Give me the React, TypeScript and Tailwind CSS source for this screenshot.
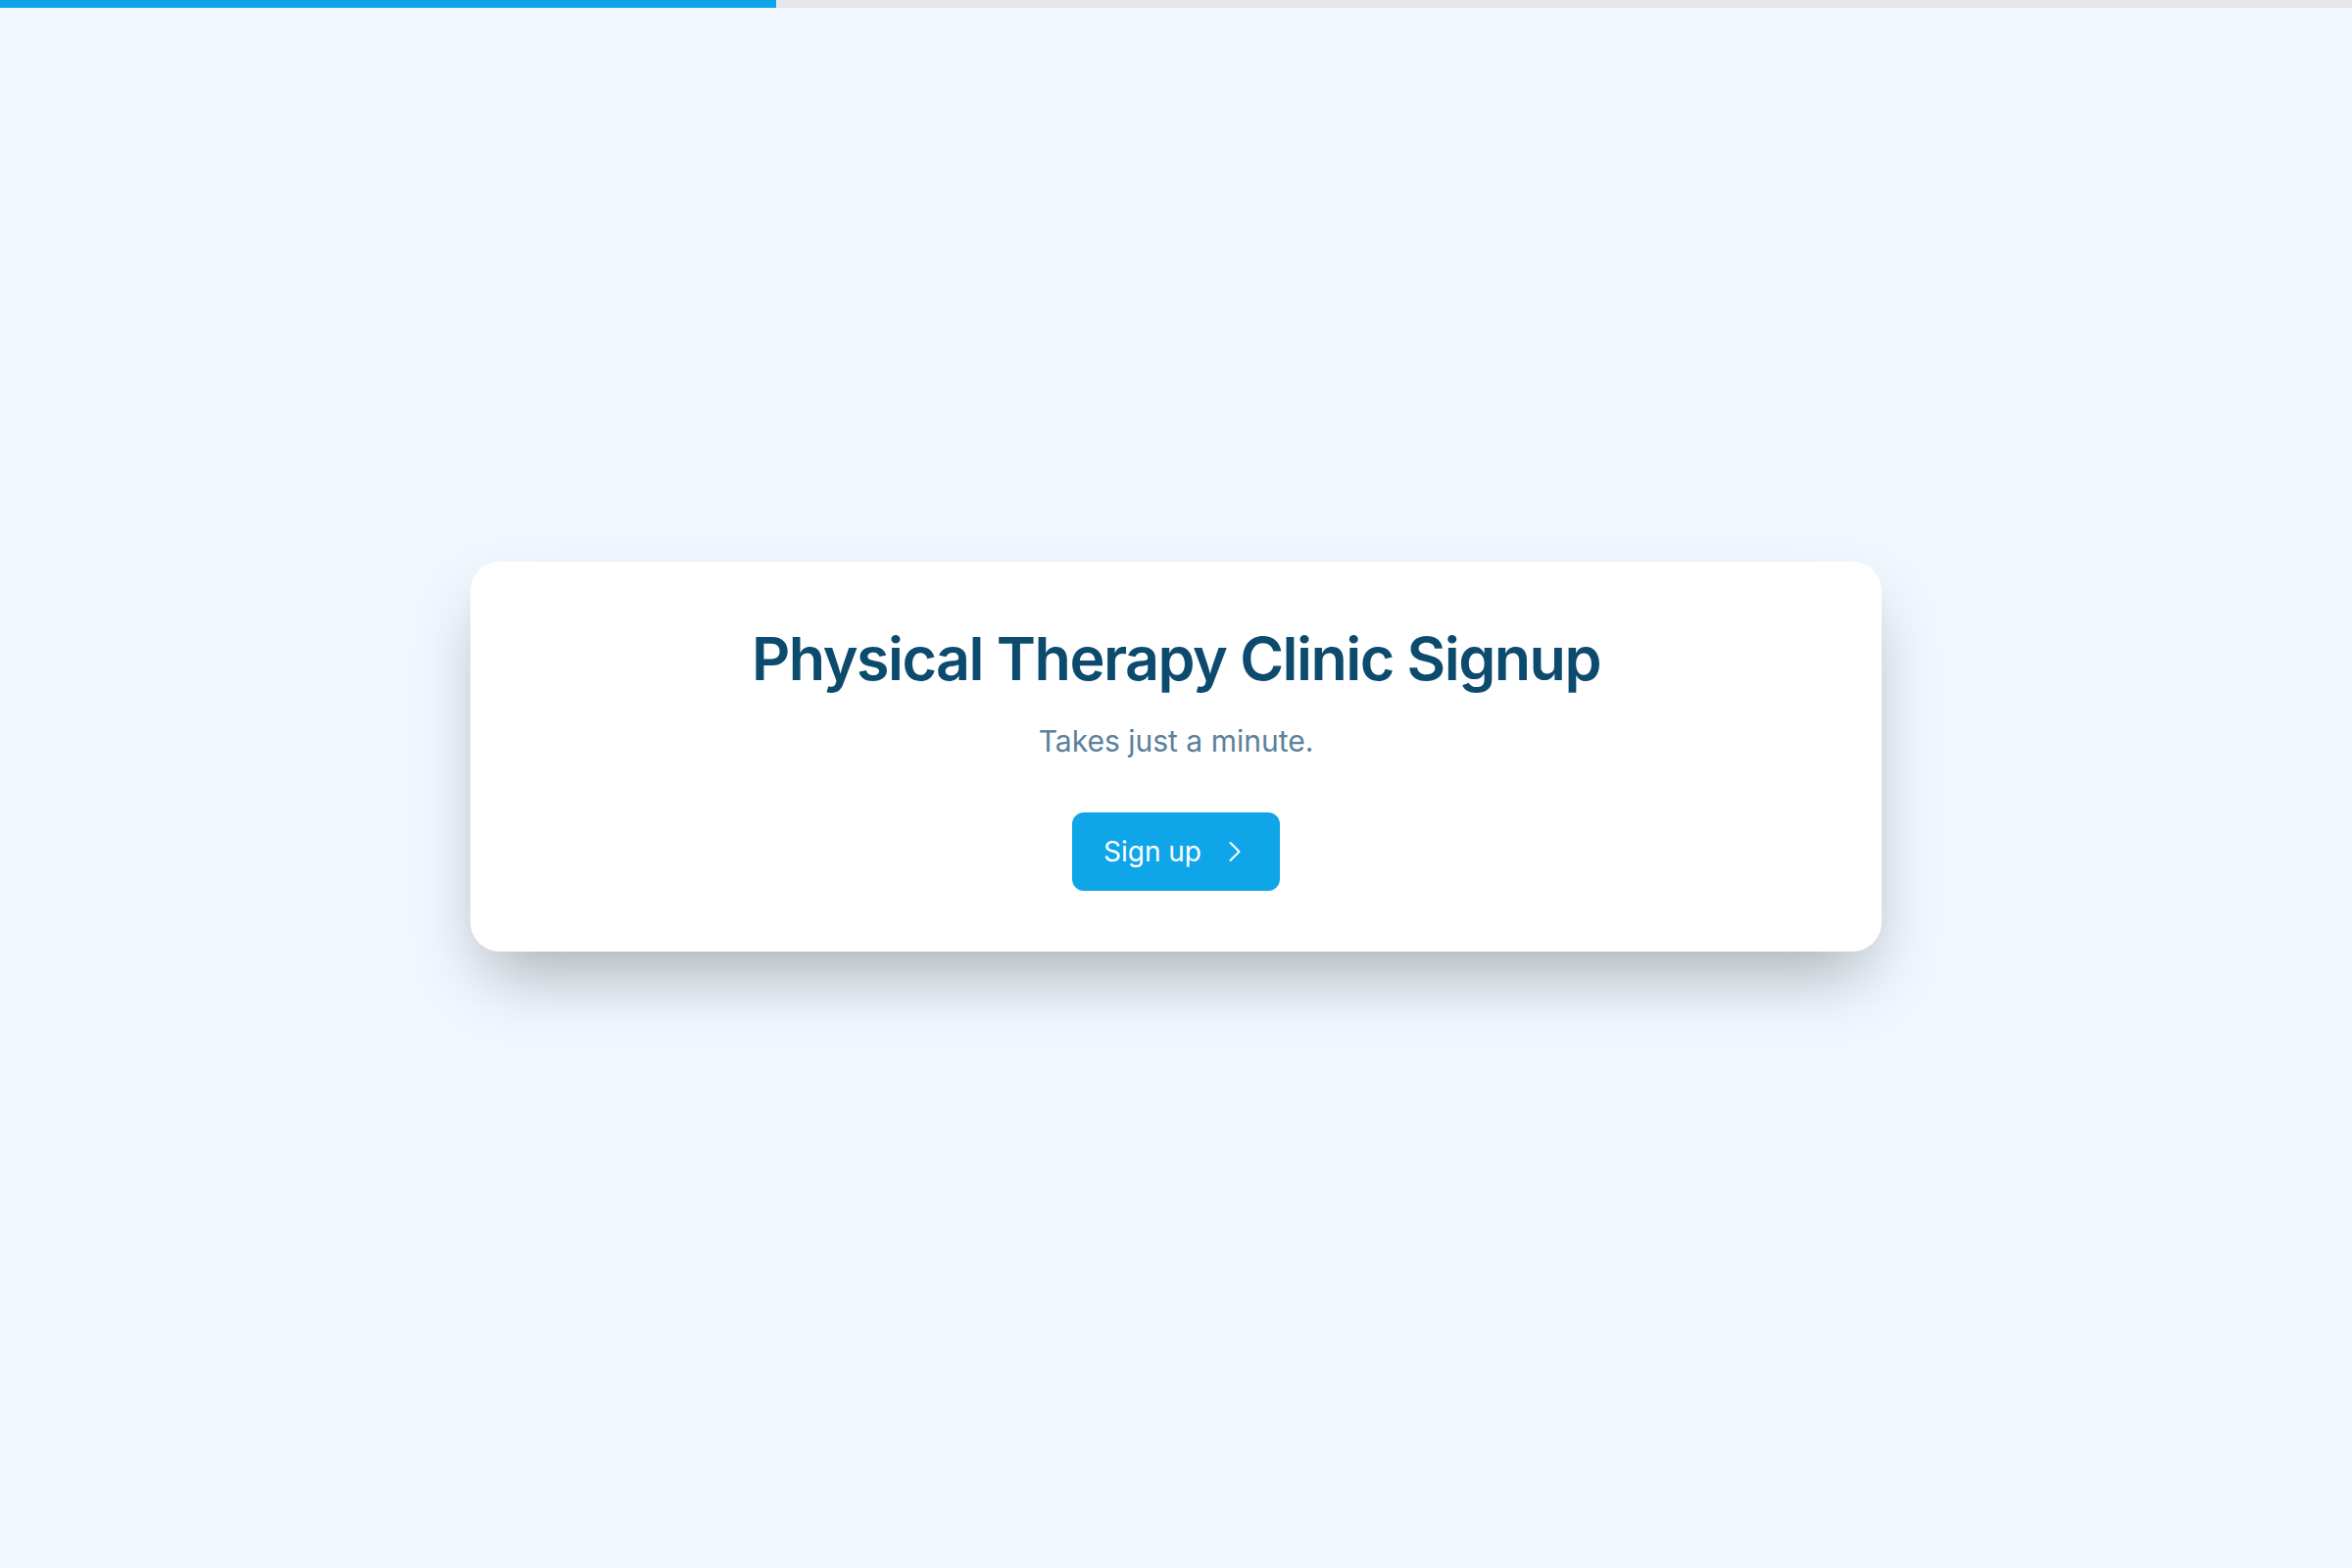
import { ChevronRight } from "lucide-react";

export default function App() {
  return (
    <div
      className="min-h-screen bg-[#f0f7fe] flex flex-col"
      style={{ fontFamily: "Inter, 'Noto Sans', sans-serif" }}
    >
      <div className="h-2 w-full bg-gray-200">
        <div className="h-full w-[33%] bg-[#0ea5e9]" />
      </div>
      <main className="flex-1 flex items-center justify-center px-8 pb-16">
        <section className="w-[1440px] rounded-[30px] bg-white px-16 pt-[63px] pb-[62px] shadow-[0_35px_70px_-15px_rgba(0,0,0,0.3)] flex flex-col items-center text-center">
          <h1 className="text-[61px] leading-[72px] font-semibold tracking-tight text-[#0c4a6e]">
            Physical Therapy Clinic Signup
          </h1>
          <p className="mt-[30px] text-[30px] leading-9 text-[#5a809c]">Takes just a minute.</p>
          <button className="mt-[55px] h-20 pl-8 pr-7 rounded-xl bg-[#0ea5e9] text-white text-[28px] flex items-center gap-4">
            Sign up
            <ChevronRight className="h-9 w-9" strokeWidth={1.4} />
          </button>
        </section>
      </main>
    </div>
  );
}
